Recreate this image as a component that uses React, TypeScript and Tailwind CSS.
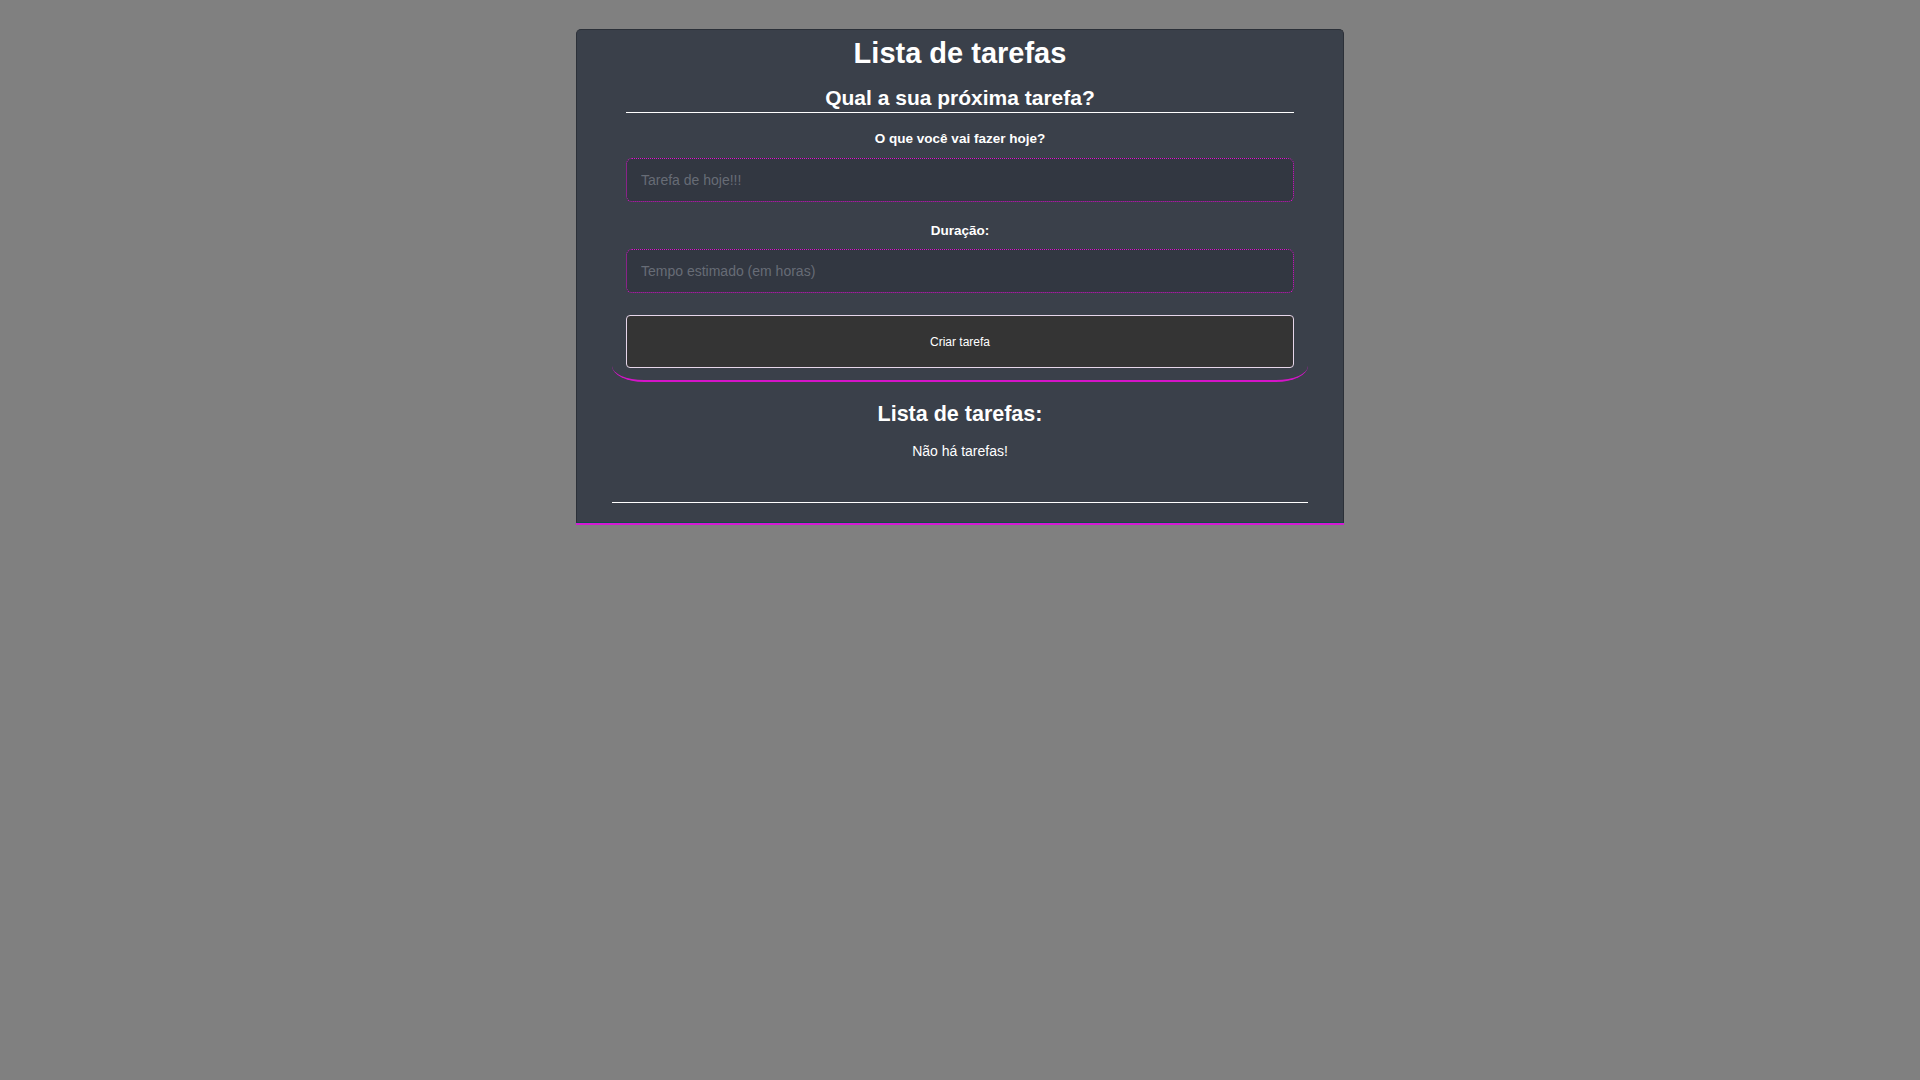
export default function App() {
  return (
    <div className="min-h-screen bg-[#808080] pt-[29px] font-['Liberation_Sans',Arial,sans-serif]">
      <div className="mx-auto w-[768px] rounded-t-[5px] border border-[#2b3038] border-b-[#0f4f44] bg-[#3a404a] px-[35px] pt-[6px] pb-[19px] shadow-[0_2px_0_#d41ad4]">
        <h1 className="text-center text-[29px] font-bold leading-[34px] text-white">Lista de tarefas</h1>

        <form
          className="mt-[16px] rounded-bl-[32px_16px] rounded-br-[32px_16px] border-b-2 border-[#d414c8] px-[14px] pb-[12px]"
          onSubmit={e => e.preventDefault()}
        >
          <h2 className="border-b border-white pb-[2px] text-center text-[21px] font-bold leading-[24px] text-white">
            Qual a sua próxima tarefa?
          </h2>

          <label className="mt-[18px] block text-center text-[13.5px] font-bold leading-[16px] text-white">
            O que você vai fazer hoje?
          </label>
          <input
            type="text"
            placeholder="Tarefa de hoje!!!"
            className="mt-[11px] block h-[44px] w-full rounded-[6px] border border-dotted border-[#e010d0] bg-[#323741] px-[14px] text-[14px] text-white outline-none placeholder:text-[#676c76]"
          />

          <label className="mt-[21px] block text-center text-[13.5px] font-bold leading-[16px] text-white">
            Duração:
          </label>
          <input
            type="text"
            placeholder="Tempo estimado (em horas)"
            className="mt-[10px] block h-[44px] w-full rounded-[6px] border border-dotted border-[#e010d0] bg-[#323741] px-[14px] text-[14px] text-white outline-none placeholder:text-[#676c76]"
          />

          <button
            type="submit"
            className="mt-[22px] block h-[53px] w-full rounded-[4px] border border-[#e6d6ea] bg-[#343434] text-[12px] text-white"
          >
            Criar tarefa
          </button>
        </form>

        <h2 className="mt-[19px] text-center text-[21.5px] font-bold leading-[26px] text-white">Lista de tarefas:</h2>
        <p className="mt-[16px] text-center text-[14px] leading-[16px] text-white">Não há tarefas!</p>

        <hr className="mt-[43px] border-0 border-t border-white" />
      </div>
    </div>
  );
}
